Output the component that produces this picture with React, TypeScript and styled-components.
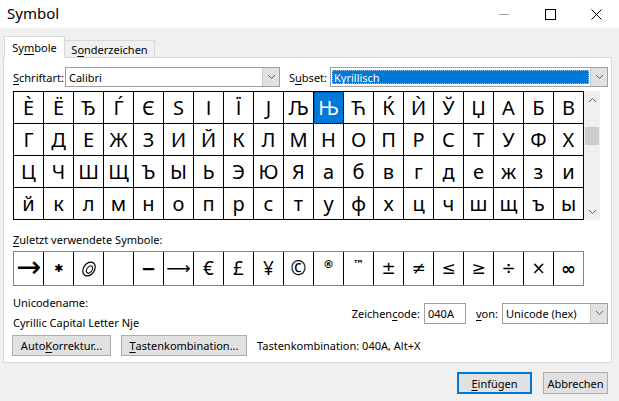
import React from "react";
import styled, { createGlobalStyle, css } from "styled-components";

const GlobalStyle = createGlobalStyle`
  html, body { margin: 0; padding: 0; background: #f0f0f0; }
  * { box-sizing: border-box; }
`;

const UI_FONT = `"Noto Sans", "DejaVu Sans", sans-serif`;

const rows: string[][] = [
  "ЀЁЂЃЄЅІЇЈЉЊЋЌЍЎЏАБВ".split(""),
  "ГДЕЖЗИЙКЛМНОПРСТУФХ".split(""),
  "ЦЧШЩЪЫЬЭЮЯабвгдежзи".split(""),
  "йклмнопрстуфхцчшщъы".split(""),
];

type RecentKind = "arrow" | "star" | "glyph" | "empty" | "text" | "small" | "math" | "bold";
const recent: { ch: string; kind: RecentKind }[] = [
  { ch: "→", kind: "arrow" },
  { ch: "✱", kind: "star" },
  { ch: "", kind: "glyph" },
  { ch: "", kind: "empty" },
  { ch: "−", kind: "bold" },
  { ch: "⟶", kind: "math" },
  { ch: "€", kind: "text" },
  { ch: "£", kind: "text" },
  { ch: "¥", kind: "text" },
  { ch: "©", kind: "text" },
  { ch: "®", kind: "small" },
  { ch: "™", kind: "small" },
  { ch: "±", kind: "math" },
  { ch: "≠", kind: "math" },
  { ch: "≤", kind: "math" },
  { ch: "≥", kind: "math" },
  { ch: "÷", kind: "math" },
  { ch: "×", kind: "math" },
  { ch: "∞", kind: "bold" },
];

const Window = styled.div`
  width: 619px;
  height: 401px;
  background: #f0f0f0;
  display: flex;
  flex-direction: column;
  font-family: ${UI_FONT};
  font-size: 11px;
  color: #000;
  overflow: hidden;
`;

const TitleBar = styled.div`
  height: 28px;
  background: #fff;
  display: flex;
  align-items: center;
  padding-left: 7px;
`;

const Title = styled.div`
  font-size: 15px;
  flex: 1;
  margin-top: -2px;
`;

const WinButton = styled.div`
  width: 46px;
  height: 28px;
  display: flex;
  align-items: center;
  justify-content: center;
`;

const Body = styled.div`
  padding: 8px 7px 0 3px;
  display: flex;
  flex-direction: column;
`;

const TabRow = styled.div`
  display: flex;
  align-items: flex-end;
  margin-left: 1px;
  height: 21px;
`;

const Tab = styled.div<{ $active?: boolean; $w: number }>`
  width: ${(p) => p.$w}px;
  border: 1px solid #d9d9d9;
  border-bottom: none;
  display: flex;
  align-items: center;
  justify-content: center;
  position: relative;
  ${(p) =>
    p.$active
      ? css`
          background: #fff;
          height: 22px;
          margin-bottom: -1px;
          padding-bottom: 1px;
          z-index: 1;
        `
      : css`
          background: #f0f0f0;
          height: 17px;
          margin-left: -1px;
        `}
`;

const Key = styled.span`
  text-decoration: underline;
  text-underline-offset: 2px;
`;

const Panel = styled.div`
  width: 609px;
  height: 306px;
  background: #fff;
  border: 1px solid #d9d9d9;
  padding: 9px 3px 7px 9px;
  display: flex;
  flex-direction: column;
`;

const FontRow = styled.div`
  display: flex;
  align-items: center;
  height: 20px;
`;

const Label = styled.div<{ $w?: number; $ml?: number }>`
  width: ${(p) => (p.$w ? `${p.$w}px` : "auto")};
  margin-left: ${(p) => p.$ml || 0}px;
  white-space: nowrap;
`;

const Combo = styled.div<{ $w: number; $ml?: number; $h?: number }>`
  width: ${(p) => p.$w}px;
  height: ${(p) => p.$h || 20}px;
  margin-left: ${(p) => p.$ml || 0}px;
  border: 1px solid #a0a0a0;
  background: #fff;
  display: flex;
  align-items: stretch;
`;

const ComboText = styled.div<{ $selected?: boolean }>`
  flex: 1;
  display: flex;
  align-items: center;
  padding-left: 3px;
  ${(p) =>
    p.$selected &&
    css`
      margin: 2px 1px 2px 1px;
      padding-left: 2px;
      background: #0078d7;
      color: #fff;
      outline: 1px dotted #9cc6ea;
      outline-offset: -1px;
    `}
`;

const DropButton = styled.div`
  width: 17px;
  background: #e1e1e1;
  border-left: 1px solid #c8c8c8;
  display: flex;
  align-items: center;
  justify-content: center;
`;

const GridRow = styled.div`
  display: flex;
  margin-top: 4px;
`;

const CharGrid = styled.div`
  display: grid;
  grid-template-columns: repeat(19, 30px);
  grid-auto-rows: 32px;
  border-left: 1px solid #000;
  border-top: 1px solid #000;
  width: 571px;
`;

const CharCell = styled.div<{ $selected?: boolean }>`
  border-right: 1px solid #000;
  border-bottom: 1px solid #000;
  display: flex;
  align-items: center;
  justify-content: center;
  font-family: "Noto Sans", "DejaVu Sans", sans-serif;
  font-size: 20px;
  line-height: 1;
  padding-top: 1px;
  ${(p) =>
    p.$selected &&
    css`
      background: #0078d7;
      color: #fff;
      outline: 1px dotted #0c3f73;
      outline-offset: -1px;
    `}
`;

const ScrollBar = styled.div`
  width: 16px;
  height: 129px;
  background: #f0f0f0;
  display: flex;
  flex-direction: column;
  align-items: center;
`;

const ScrollArrow = styled.div`
  width: 16px;
  height: 17px;
  display: flex;
  align-items: center;
  justify-content: center;
`;

const Thumb = styled.div`
  width: 14px;
  height: 18px;
  background: #cdcdcd;
  margin-top: 19px;
`;

const Spacer = styled.div`
  flex: 1;
`;

const SectionLabel = styled.div`
  margin-top: 12px;
  line-height: 16px;
  height: 16px;
`;

const RecentGrid = styled.div`
  margin-top: 3px;
  display: grid;
  grid-template-columns: repeat(19, 30px);
  grid-auto-rows: 33px;
  border: 1px solid #828282;
  border-right: none;
  width: 571px;
`;

const RecentCell = styled.div<{ $kind: RecentKind }>`
  border-right: 1px solid #000;
  display: flex;
  justify-content: center;
  align-items: center;
  line-height: 1;
  font-family: "DejaVu Sans", sans-serif;
  &:last-child {
    border-right-color: #828282;
  }
  ${(p) => {
    switch (p.$kind) {
      case "arrow":
        return css`
          font-size: 30px;
          padding-bottom: 3px;
        `;
      case "star":
        return css`
          font-size: 11px;
        `;
      case "text":
        return css`
          font-family: "Noto Sans", sans-serif;
          font-size: 19px;
        `;
      case "small":
        return css`
          font-size: 11px;
          font-weight: bold;
          align-items: flex-start;
          padding-top: 7px;
        `;
      case "bold":
        return css`
          font-size: 18px;
          font-weight: bold;
        `;
      case "math":
        return css`
          font-size: 17px;
        `;
      default:
        return css``;
    }
  }}
`;

const InfoRow = styled.div`
  margin-top: 7px;
  height: 40px;
  display: flex;
  align-items: center;
`;

const InfoLines = styled.div`
  display: flex;
  flex-direction: column;
  line-height: 20px;
`;

const CodeGroup = styled.div`
  margin-left: auto;
  display: flex;
  align-items: center;
`;

const CodeInput = styled.div`
  width: 42px;
  height: 21px;
  border: 1px solid #a0a0a0;
  background: #fff;
  display: flex;
  align-items: center;
  padding-left: 3px;
  margin-left: 4px;
`;

const ButtonRow = styled.div`
  margin-top: 2px;
  margin-left: -1px;
  display: flex;
  align-items: center;
`;

const Button = styled.div<{ $w: number; $ml?: number; $h?: number; $default?: boolean }>`
  width: ${(p) => p.$w}px;
  height: ${(p) => p.$h || 21}px;
  margin-left: ${(p) => p.$ml || 0}px;
  background: #e1e1e1;
  border: 1px solid #adadad;
  display: flex;
  align-items: center;
  justify-content: center;
  white-space: nowrap;
  ${(p) =>
    p.$default &&
    css`
      border-color: #0078d7;
      box-shadow: inset 0 0 0 1px #0078d7;
    `}
`;

const Footer = styled.div`
  margin-top: 9px;
  display: flex;
  justify-content: flex-end;
  padding-right: 4px;
`;

const Chevron = ({ up }: { up?: boolean }) => (
  <svg width="9" height="6" viewBox="0 0 9 6">
    <polyline
      points={up ? "1,5 4.5,1.5 8,5" : "1,1 4.5,4.5 8,1"}
      fill="none"
      stroke="#606060"
      strokeWidth="1"
    />
  </svg>
);

const OddGlyph = () => (
  <svg width="16" height="18" viewBox="0 0 16 18">
    <ellipse cx="8" cy="9" rx="5.5" ry="7.5" transform="rotate(35 8 9)" fill="none" stroke="#000" strokeWidth="1.2" />
    <ellipse cx="8.5" cy="9.5" rx="2.5" ry="4" transform="rotate(35 8.5 9.5)" fill="none" stroke="#000" strokeWidth="1" />
  </svg>
);

export default function App() {
  return (
    <>
      <GlobalStyle />
      <Window>
        <TitleBar>
          <Title>Symbol</Title>
          <WinButton>
            <svg width="10" height="1">
              <rect width="10" height="1" fill="#a0a0a0" />
            </svg>
          </WinButton>
          <WinButton>
            <svg width="11" height="11">
              <rect x="0.5" y="0.5" width="10" height="10" fill="none" stroke="#000" />
            </svg>
          </WinButton>
          <WinButton>
            <svg width="11" height="11">
              <path d="M0.5 0.5 L10.5 10.5 M10.5 0.5 L0.5 10.5" stroke="#000" strokeWidth="1" />
            </svg>
          </WinButton>
        </TitleBar>
        <Body>
          <TabRow>
            <Tab $active $w={61}>
              Sy<Key>m</Key>bole
            </Tab>
            <Tab $w={91}>
              S<Key>o</Key>nderzeichen
            </Tab>
          </TabRow>
          <Panel>
            <FontRow>
              <Label $w={52}>
                <Key>S</Key>chriftart:
              </Label>
              <Combo $w={215}>
                <ComboText>Calibri</ComboText>
                <DropButton>
                  <Chevron />
                </DropButton>
              </Combo>
              <Label $w={41} $ml={9}>
                S<Key>u</Key>bset:
              </Label>
              <Combo $w={278}>
                <ComboText $selected>Kyrillisch</ComboText>
                <DropButton>
                  <Chevron />
                </DropButton>
              </Combo>
            </FontRow>
            <GridRow>
              <CharGrid>
                {rows.map((row, r) =>
                  row.map((ch, c) => (
                    <CharCell key={`${r}-${c}`} $selected={r === 0 && c === 10}>
                      {ch}
                    </CharCell>
                  ))
                )}
              </CharGrid>
              <ScrollBar>
                <ScrollArrow>
                  <Chevron up />
                </ScrollArrow>
                <Thumb />
                <Spacer />
                <ScrollArrow>
                  <Chevron />
                </ScrollArrow>
              </ScrollBar>
            </GridRow>
            <SectionLabel>
              <Key>Z</Key>uletzt verwendete Symbole:
            </SectionLabel>
            <RecentGrid>
              {recent.map((s, i) => (
                <RecentCell key={i} $kind={s.kind}>
                  {s.kind === "glyph" ? <OddGlyph /> : s.ch}
                </RecentCell>
              ))}
            </RecentGrid>
            <InfoRow>
              <InfoLines>
                <div>Unicodename:</div>
                <div>Cyrillic Capital Letter Nje</div>
              </InfoLines>
              <CodeGroup>
                <Label>
                  Zeichen<Key>c</Key>ode:
                </Label>
                <CodeInput>040A</CodeInput>
                <Label $ml={10}>
                  <Key>v</Key>on:
                </Label>
                <Combo $w={106} $ml={4} $h={21}>
                  <ComboText>Unicode (hex)</ComboText>
                  <DropButton>
                    <Chevron />
                  </DropButton>
                </Combo>
              </CodeGroup>
            </InfoRow>
            <ButtonRow>
              <Button $w={99}>
                Auto<Key>K</Key>orrektur...
              </Button>
              <Button $w={126} $ml={10}>
                <Key>T</Key>astenkombination...
              </Button>
              <Label $ml={10}>Tastenkombination: 040A, Alt+X</Label>
            </ButtonRow>
          </Panel>
          <Footer>
            <Button $w={75} $h={22} $default>
              <Key>E</Key>infügen
            </Button>
            <Button $w={65} $h={22} $ml={11}>
              Abbrechen
            </Button>
          </Footer>
        </Body>
      </Window>
    </>
  );
}
